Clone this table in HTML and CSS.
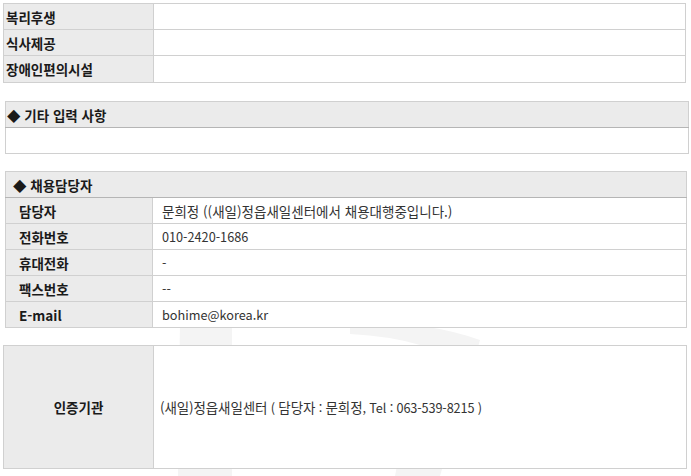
FILE: index.html
```html
<!DOCTYPE html>
<html lang="ko">
<head>
<meta charset="utf-8">
<link rel="stylesheet" href="styles.css">
</head>
<body>
<div class="page">
  <svg class="watermark" width="691" height="476" viewBox="0 0 691 476" aria-hidden="true">
    <path d="M178 476 L180 320 L232 320 L232 476 Z" fill="#f4f4f4"/>
    <path d="M350 320 Q430 322 480 340 L440 476 L395 476 L420 345 Q390 336 350 334 Z" fill="#f4f4f4"/>
  </svg>

  <table class="grid t1">
    <colgroup><col class="c1"><col></colgroup>
    <tr><th class="lbl">복리후생</th><td></td></tr>
    <tr><th class="lbl">식사제공</th><td></td></tr>
    <tr><th class="lbl">장애인편의시설</th><td></td></tr>
  </table>

  <table class="grid t2">
    <tr><th class="head">◆ 기타 입력 사항</th></tr>
    <tr><td class="blank"></td></tr>
  </table>

  <table class="grid t3">
    <colgroup><col class="c3"><col></colgroup>
    <tr><th class="head" colspan="2">◆ 채용담당자</th></tr>
    <tr><th class="lbl">담당자</th><td>문희정 ((새일)정읍새일센터에서 채용대행중입니다.)</td></tr>
    <tr><th class="lbl">전화번호</th><td class="en">010-2420-1686</td></tr>
    <tr><th class="lbl">휴대전화</th><td class="en">-</td></tr>
    <tr><th class="lbl">팩스번호</th><td class="en">--</td></tr>
    <tr><th class="lbl">E-mail</th><td class="en">bohime@korea.kr</td></tr>
  </table>

  <table class="grid t4">
    <colgroup><col class="c1"><col></colgroup>
    <tr><th class="lbl">인증기관</th><td>(새일)정읍새일센터<span class="en"> ( </span>담당자<span class="en"> : </span>문희정<span class="en">, Tel : 063-539-8215 )</span></td></tr>
  </table>
</div>
</body>
</html>
```

FILE: styles.css
```css
html, body {
  margin: 0;
  padding: 0;
  background: #fff;
}
body {
  font-family: "Noto Sans CJK KR", "Noto Sans", sans-serif;
  font-size: 13.5px;
  color: #222;
}
.page {
  position: relative;
  width: 691px;
  height: 476px;
  overflow: hidden;
  padding-top: 3px;
  box-sizing: border-box;
}
.watermark {
  position: absolute;
  left: 0;
  top: 0;
  z-index: 0;
}
.grid {
  position: relative;
  z-index: 1;
  border-collapse: collapse;
  background: #fff;
  table-layout: fixed;
}
.grid th, .grid td {
  border: 1px solid #d0d0d0;
  padding: 0 8px;
  text-align: left;
  vertical-align: middle;
  line-height: 18px;
  white-space: nowrap;
}
.grid th {
  font-weight: bold;
  background: #ebebeb;
  color: #1a1a1a;
}
.grid td {
  font-weight: normal;
  color: #333;
}
.grid .en { font-size: 12.7px; }
.c1 { width: 150px; }
.c3 { width: 147px; }

.t1 {
  margin-left: 3px;
  width: 683px;
}
.t1 th { padding-left: 2px; height: 25px; }
.t1 td { height: 25px; }
.t1 tr:nth-child(3) th, .t1 tr:nth-child(3) td { height: 26px; }

.t2 {
  margin-left: 5px;
  margin-top: 18px;
  width: 684px;
}
.head {
  height: 25px;
}
.t2 .head { padding-left: 1px; }
.t3 .head { padding-left: 7px; }
.t2 .head, .t3 .head { border-bottom: 1px solid #b5b5b5; }
.t2 .blank { height: 25px; }

.t3 {
  margin-left: 5px;
  margin-top: 17px;
  width: 682px;
}
.t3 th.lbl { height: 25px; padding-left: 13px; }
.t3 td { height: 25px; padding-left: 9px; }

.t4 {
  margin-left: 3px;
  margin-top: 17px;
  width: 684px;
}
.t4 th.lbl {
  text-align: center;
  height: 122px;
}
.t4 td { padding-left: 6px; letter-spacing: -0.12px; }
```
